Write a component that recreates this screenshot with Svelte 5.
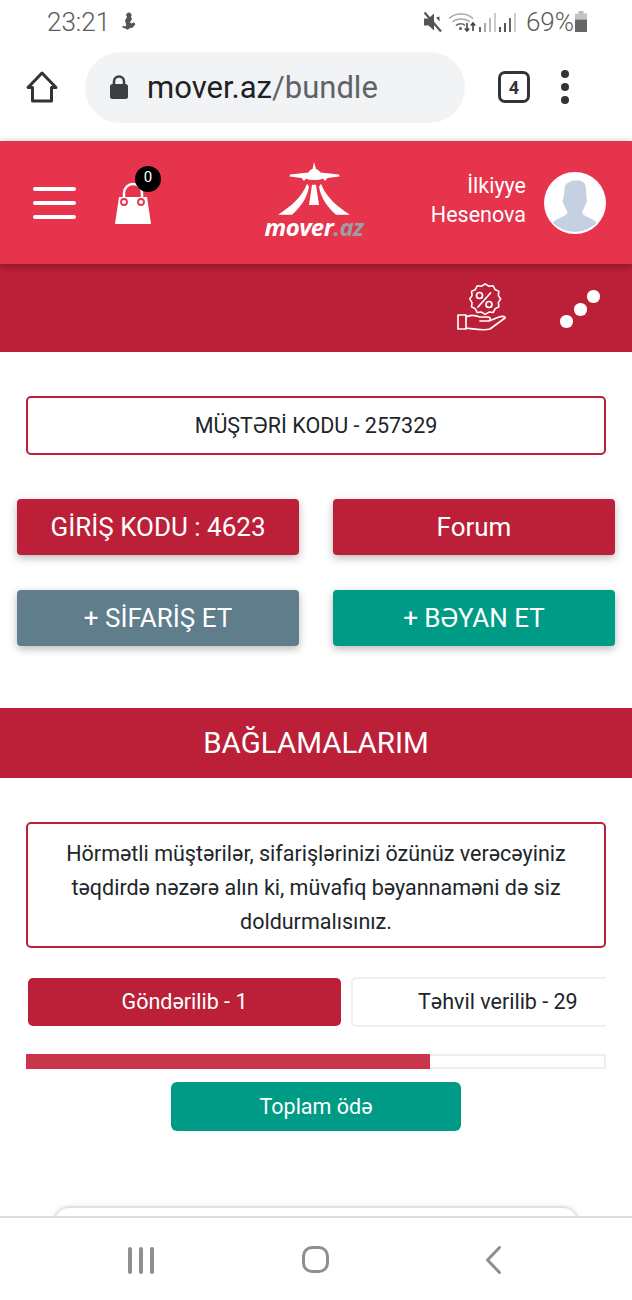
<script>
  const buttons = [
    { label: 'GİRİŞ KODU : 4623', tone: 'red' },
    { label: 'Forum', tone: 'red' },
    { label: '+ SİFARİŞ ET', tone: 'slate' },
    { label: '+ BƏYAN ET', tone: 'teal' }
  ];
</script>

<div class="page">
  <div class="status">
    <div class="st-left">
      <span>23:21</span>
      <svg class="st-pin" width="18" height="22" viewBox="0 0 18 22"><path fill="#555" d="M9 1.5a2.6 2.6 0 0 1 2 4.2l1 2.2-2 3.3 1.4 1.2 2.6-1.2 1.4 2-2.6 3.2-3 .9-2.3 1.5-2.2-1.3-3-1 .6-2.1 2 1 1.4-1-.6-2.4L5 9.500l2-3.500A2.600 2.600 0 0 1 9 1.500z"/></svg>
    </div>
    <div class="st-right">
      <svg width="24" height="24" viewBox="0 0 24 24"><path fill="#555" d="M3 8.500h4.500L13 3.500v17l-5.500-5H3z"/><path fill="#555" d="M15 7.500l3.500-1v5z"/><path stroke="#555" stroke-width="2.200" d="M3.500 2.500 20 21.500"/></svg>
      <svg width="30" height="24" viewBox="0 0 30 24" fill="none" stroke="#aaa" stroke-width="1.600"><path d="M1 8.500C7 2.500 19 2.500 25 8.500"/><path d="M4.500 12c4-4 13-4 17 0"/><path stroke="#666" d="M8 15.500c2.500-2.300 7-2.300 9 0"/><circle cx="12.500" cy="18.500" r="1.500" fill="#555" stroke="none"/><path stroke="#444" d="M19 13v8m-2.200-2.500 2.200 2.500 2.200-2.500M25 21v-8m-2.200 2.500 2.200-2.500 2.200 2.500"/></svg>
      <svg class="sig" width="20" height="22" viewBox="0 0 20 22"><rect x="1" y="16" width="2" height="5" fill="#666"/><rect x="6" y="12" width="2" height="9" fill="#aaa"/><rect x="11" y="7" width="2" height="14" fill="#bbb"/><rect x="16" y="2" width="2" height="19" fill="#ccc"/></svg>
      <svg class="sig" width="20" height="22" viewBox="0 0 20 22"><rect x="1" y="16" width="2" height="5" fill="#555"/><rect x="6" y="12" width="2" height="9" fill="#555"/><rect x="11" y="7" width="2" height="14" fill="#666"/><rect x="16" y="2" width="2" height="19" fill="#ccc"/></svg>
      <span class="pct">69%</span>
      <svg class="batt" width="12" height="22" viewBox="0 0 12 22"><rect x="3.500" y="0" width="5" height="3" fill="#bbb"/><rect x="0" y="2.500" width="12" height="6" fill="#c4c4c4"/><rect x="0" y="8.500" width="12" height="12.500" fill="#666"/></svg>
    </div>
  </div>

  <div class="browser">
    <svg width="36" height="36" viewBox="0 0 36 36" fill="none" stroke="#333" stroke-width="3" stroke-linejoin="round"><path d="M18 4 4 18.500h4.500V32h19V18.500H32z"/></svg>
    <div class="url">
      <svg width="20" height="26" viewBox="0 0 20 26"><path fill="none" stroke="#3c4043" stroke-width="2.500" d="M5 11V7.500a5 5 0 0 1 10 0V11"/><rect x="1" y="10" width="18" height="15" rx="2.500" fill="#3c4043"/></svg>
      <span class="url-text"><b>mover.az</b>/bundle</span>
    </div>
    <div class="tabs">4</div>
    <div class="kebab"><i></i><i></i><i></i></div>
  </div>

  <header class="head">
    <div class="burger"><i></i><i></i><i></i></div>
    <div class="bag">
      <svg width="38" height="44" viewBox="0 0 38 44"><path fill="none" stroke="#fff" stroke-width="2.500" d="M10 21v-8a9 9 0 0 1 18 0v8"/><path fill="#fff" d="M5 17h28l4 27H1z"/><circle cx="10" cy="22" r="3" fill="none" stroke="#e5344b" stroke-width="1.800"/><circle cx="27" cy="22" r="3" fill="none" stroke="#e5344b" stroke-width="1.800"/></svg>
      <span class="badge">0</span>
    </div>
    <div class="logo">
      <svg width="74" height="56" viewBox="0 0 74 56">
        <path fill="#fff" d="M37 0l2 7c2 .5 3.500 2 4.500 3.500L62 12.500l.5 2-12 1.500-2.500 3-2-2.500c-4 2-13 2-17 0l-2 2.500-2.500-3-12-1.500.5-2 18.500-2C32 9 33.500 7.500 35.500 7z"/>
        <path fill="#fff" d="M30 24 32 27C30 39 24 47 15 56H1C13 48 25 38 30 24zM44 24C49 38 61 48 73 56H59C50 47 44 39 42 27zM35 25h4l3 21H32z" transform="translate(0 -1.500) scale(1 .97)"/>
      </svg>
      <div class="logo-word"><span>mover</span><em>.az</em></div>
    </div>
    <div class="user">İlkiyye<br />Hesenova</div>
    <div class="avatar">
      <svg width="62" height="62" viewBox="0 0 62 62"><circle cx="31" cy="31" r="31" fill="#fff"/><path fill="#c5d0e2" d="M21 14c2-4 7-6 14-5.500 5 .5 7 4 7 9l.5 9c1 .5.500 4-1 6-1 3-3 6-3.500 8 0 3 9 5 15 10a31 31 0 0 1-44.500 0c6-5 15-7 15-10 0-2-3-5-3.500-8-1.500-2-2-5.500-.5-6z"/></svg>
    </div>
  </header>

  <div class="sub">
    <svg class="promo" width="52" height="50" viewBox="0 0 52 50" fill="none" stroke="#fff" stroke-width="1.700" stroke-linejoin="round" stroke-linecap="round">
      <path d="M30 2l4 2.500 4.500-.5 2 4 4 2-.5 4.500L46.500 18l-2.500 4 .5 4.500-4 2-2 4-4.500-.5-4 2.500-4-2.500-4.500.5-2-4-4-2 .5-4.500L13.500 18l2.500-3.500-.5-4.500 4-2 2-4 4.500.5z" transform="translate(0 -1) scale(.94)"/>
      <path d="M21 24 33.500 10"/><circle cx="22.500" cy="12.500" r="3"/><circle cx="32" cy="21.500" r="3"/>
      <path d="M1 32h8v14H1zM9 34c5-3 9-2 14 0h8c3 0 3 4 0 4h-8 9l10-4c4-1.500 7 0 6 1L33 46c-6 2-16 0-24-1"/>
    </svg>
    <div class="dots"><i></i><i></i><i></i></div>
  </div>

  <main>
    <div class="code">MÜŞTƏRİ KODU - 257329</div>

    <div class="btn-grid">
      {#each buttons as b}
        <div class="btn {b.tone}">{b.label}</div>
      {/each}
    </div>

    <h2 class="title">BAĞLAMALARIM</h2>

    <p class="notice">Hörmətli müştərilər, sifarişlərinizi özünüz verəcəyiniz təqdirdə nəzərə alın ki, müvafiq bəyannaməni də siz doldurmalısınız.</p>

    <div class="tabs-row">
      <div class="tab active">Göndərilib - 1</div>
      <div class="tab plain"><span>Təhvil verilib - 29</span></div>
    </div>

    <div class="progress"><div class="bar" style="width: 70.200%"></div></div>

    <div class="pay">Toplam ödə</div>

    <div class="card"></div>
  </main>

  <nav class="nav">
    <div class="recents"><i></i><i></i><i></i></div>
    <div class="home"></div>
    <svg width="20" height="30" viewBox="0 0 20 30" fill="none" stroke="#8f8f8f" stroke-width="3" stroke-linecap="round" stroke-linejoin="round"><path d="M15.500 2.500 3.500 15l12 12.500"/></svg>
  </nav>
</div>

<style>
  :global(body) { margin: 0; background: #fff; }
  .page {
    position: relative; width: 632px; height: 1300px; overflow: hidden; background: #fff;
    font-family: Roboto, "Noto Sans", sans-serif; color: #212529;
  }
  .status {
    height: 44px; box-sizing: border-box; padding: 0 47px; display: flex; justify-content: space-between;
    align-items: center; color: #5b5b5b; font-size: 26px; font-weight: 300;
  }
  .st-left { display: flex; align-items: center; gap: 10px; }
  .st-right { display: flex; align-items: center; margin-right: -2px; }
  .st-right svg:first-child { margin-right: 3px; }
  .sig { margin-left: 0; }
  .pct { margin: 0 1px 0 8px; }
  .browser { height: 96px; display: flex; align-items: center; box-sizing: border-box; padding: 0 0 10px 24px; position: relative; }
  .url {
    margin-left: 25px; width: 380px; height: 71px; border-radius: 36px; background: #f1f3f4; box-sizing: border-box;
    padding-left: 24px; display: flex; align-items: center; gap: 18px;
  }
  .url-text { font-size: 31px; color: #5f6368; }
  .url-text b { font-weight: 400; color: #202124; }
  .tabs {
    margin-left: 33px; width: 32px; height: 32px; border: 3px solid #333; border-radius: 7px; box-sizing: border-box;
    display: flex; align-items: center; justify-content: center; font-size: 18px; font-weight: 700; color: #333; font-family: "Liberation Sans Narrow", Roboto, sans-serif;
  }
  .kebab { margin-left: 31px; display: flex; flex-direction: column; gap: 5px; }
  .kebab i { display: block; width: 8px; height: 8px; border-radius: 50%; background: #333; }
  .head {
    height: 123px; margin-top: 1px; background: #e5344b; display: flex; align-items: center; position: relative; z-index: 1;
    box-shadow: 0 2px 8px rgba(0,0,0,.3); box-sizing: border-box; padding-left: 33px;
  }
  .burger { width: 43px; display: flex; flex-direction: column; gap: 10px; }
  .burger i { display: block; height: 4px; border-radius: 2px; background: #fff; }
  .bag { position: relative; margin-left: 38px; width: 38px; height: 44px; margin-top: -1px; }
  .badge {
    position: absolute; left: 21px; top: -14px; width: 26px; height: 26px; border-radius: 50%; background: #000; color: #fff;
    font-size: 15px; display: flex; align-items: center; justify-content: center; padding-bottom: 4px; box-sizing: border-box;
  }
  .logo { position: absolute; left: 264px; top: 21px; width: 100px; display: flex; flex-direction: column; align-items: center; }
  .logo-word { font-size: 24px; line-height: 24px; font-style: italic; font-weight: 700; color: #fff; margin-top: -3px; letter-spacing: -0.6px; font-family: "Open Sans", sans-serif; }
  .logo-word em { color: #9c9ca3; }
  .user { position: absolute; right: 106px; top: 30px; text-align: right; color: #fff; font-size: 21.500px; line-height: 29px; }
  .avatar { position: absolute; left: 544px; top: 31px; width: 62px; height: 62px; }
  .sub {
    height: 88px; background: #bc2038; position: relative; display: flex; align-items: center; box-sizing: border-box;
  }
  .promo { position: absolute; left: 457px; top: 19px; }
  .dots { position: absolute; left: 560px; top: 25px; width: 40px; height: 40px; }
  .dots i { position: absolute; width: 12.500px; height: 12.500px; border-radius: 50%; background: #fff; }
  .dots i:nth-child(1) { left: 0; top: 26px; }
  .dots i:nth-child(2) { left: 14px; top: 14px; }
  .dots i:nth-child(3) { left: 27px; top: 1px; }

  main { display: flex; flex-direction: column; }
  .code {
    margin: 44px 26px 0; height: 59px; box-sizing: border-box; border: 2px solid #bc2038; border-radius: 5px;
    display: flex; align-items: center; justify-content: center; font-size: 21.500px;
  }
  .btn-grid { margin: 44px 17px 0 17px; display: grid; grid-template-columns: 282px 282px; column-gap: 34px; row-gap: 35px; }
  .btn {
    height: 56px; border-radius: 4px; color: #fff; font-size: 26px; display: flex; align-items: center; justify-content: center;
    box-shadow: 0 3px 8px rgba(0,0,0,.28);
  }
  .red { background: #bc2038; }
  .slate { background: #607d8b; }
  .teal { background: #009b86; }
  .title {
    margin: 62px 0 0; height: 70px; background: #bc2038; color: #fff; font-weight: 400; font-size: 29.500px;
    display: flex; align-items: center; justify-content: center;
  }
  .notice {
    margin: 44px 26px 0; height: 126px; box-sizing: border-box; border: 2px solid #bc2038; border-radius: 5px; padding: 13px 16px 0;
    text-align: center; font-size: 21.500px; line-height: 34px;
  }
  .tabs-row { margin: 28px 26px 0; height: 51px; display: flex; gap: 10px; overflow: hidden; align-items: center; }
  .tab { height: 48px; box-sizing: border-box; border-radius: 5px; display: flex; align-items: center; font-size: 21.500px; flex: none; }
  .active { width: 313px; margin-left: 2px; background: #bc2038; color: #fff; justify-content: center; }
  .plain { width: 300px; height: 50px; border: 2px solid #f0f0f0; padding-left: 65px; }
  .plain span { white-space: nowrap; }
  .progress { margin: 27px 26px 0; height: 15px; box-sizing: border-box; background: #fff; border: 2px solid #eee; position: relative; }
  .bar { position: absolute; left: -2px; top: -2px; height: 15px; background: #c9354b; }
  .pay {
    margin: 13px 0 0 171px; width: 290px; height: 49px; border-radius: 6px; background: #009b86; color: #fff; font-size: 21.500px;
    display: flex; align-items: center; justify-content: center;
  }
  .card { margin: 75px 53px 0; height: 60px; border: 2px solid #e2e2e2; border-radius: 16px; box-sizing: border-box; box-shadow: 0 0 6px rgba(0,0,0,.08); }
  .nav {
    position: absolute; left: 0; right: 0; top: 1216px; height: 84px; background: #fff; border-top: 2px solid #dcdcdc; box-sizing: border-box;
  }
  .recents { position: absolute; left: 128px; top: 29px; display: flex; gap: 7px; }
  .recents i { display: block; width: 4px; height: 27px; border-radius: 2px; background: #8f8f8f; }
  .home { position: absolute; left: 302px; top: 28px; width: 28px; height: 29px; border: 3.500px solid #8f8f8f; border-radius: 10px; box-sizing: content-box; width: 21px; height: 21px; }
  .nav svg { position: absolute; left: 484px; top: 27px; }
</style>
